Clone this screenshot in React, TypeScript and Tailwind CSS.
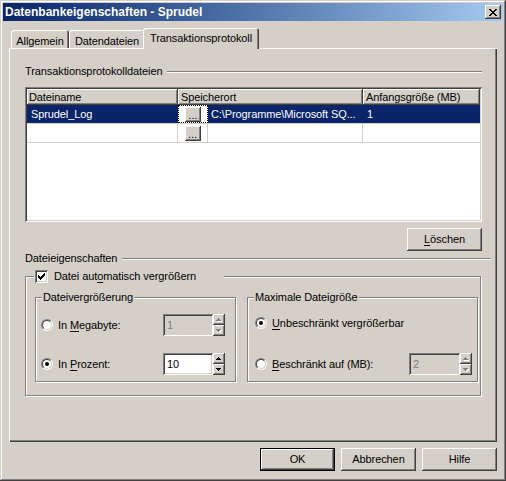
import React from 'react';

// classic Windows 2000 bevels
const RAISED = 'shadow-[inset_-1px_-1px_0_#404040,inset_1px_1px_0_#ffffff,inset_-2px_-2px_0_#808080]';
const SUNKEN = 'shadow-[inset_1px_1px_0_#808080,inset_-1px_-1px_0_#ffffff,inset_2px_2px_0_#404040,inset_-2px_-2px_0_#d4d0c8]';
const ETCHED = 'border border-[#808080] shadow-[inset_1px_1px_0_#ffffff,1px_1px_0_#ffffff]';
const LINE = 'flex-1 border-t border-t-[#808080] border-b border-b-white';

const CHECK = [
  [6, 0], [5, 1], [6, 1], [0, 2], [4, 2], [5, 2], [6, 2], [0, 3], [1, 3], [3, 3], [4, 3], [5, 3],
  [0, 4], [1, 4], [2, 4], [3, 4], [4, 4], [1, 5], [2, 5], [3, 5], [2, 6],
];

const CLOSE = [
  [0, 0], [1, 0], [6, 0], [7, 0], [1, 1], [2, 1], [5, 1], [6, 1], [2, 2], [3, 2], [4, 2], [5, 2],
  [3, 3], [4, 3], [2, 4], [3, 4], [4, 4], [5, 4], [1, 5], [2, 5], [5, 5], [6, 5], [0, 6], [1, 6], [6, 6], [7, 6],
];

const Pixels: React.FC<{ pts: number[][]; w: number; h: number; color?: string }> = ({ pts, w, h, color = '#000' }) => (
  <svg width={w} height={h} viewBox={`0 0 ${w} ${h}`} shapeRendering="crispEdges">
    {pts.map(([x, y]) => (
      <rect key={`${x}-${y}`} x={x} y={y} width={1} height={1} fill={color} />
    ))}
  </svg>
);

const Radio: React.FC<{ checked?: boolean }> = ({ checked }) => (
  <span className="block w-[12px] h-[12px] shrink-0 rounded-full border border-t-[#808080] border-l-[#808080] border-b-white border-r-white">
    <span className="flex items-center justify-center w-full h-full rounded-full border border-t-[#404040] border-l-[#404040] border-b-[#d4d0c8] border-r-[#d4d0c8] bg-white">
      {checked && <span className="block w-[4px] h-[4px] rounded-full bg-black" />}
    </span>
  </span>
);

const Arrow: React.FC<{ up?: boolean; disabled?: boolean }> = ({ up, disabled }) => {
  const d = up ? 'M2 0h1v1h1v1h1v1H0V2h1V1h1z' : 'M0 0h5v1H4v1H3v1H2V2H1V1H0z';
  return (
    <svg width={6} height={4} viewBox="0 0 6 4" shapeRendering="crispEdges">
      {disabled && <path d={d} fill="#ffffff" transform="translate(1 1)" />}
      <path d={d} fill={disabled ? '#808080' : '#000000'} />
    </svg>
  );
};

const Spin: React.FC<{ value: string; disabled?: boolean; editW: string }> = ({ value, disabled, editW }) => (
  <div className="flex">
    <div
      className={`${editW} h-[22px] ${SUNKEN} flex items-center pl-[4px] ${
        disabled ? 'bg-[#d4d0c8] text-[#808080]' : 'bg-white text-black'
      }`}
    >
      {value}
    </div>
    <div className="flex flex-col w-[12px] h-[22px]">
      <div className={`h-[11px] ${RAISED} flex items-center justify-center`}>
        <Arrow up disabled={disabled} />
      </div>
      <div className={`h-[11px] ${RAISED} flex items-center justify-center`}>
        <Arrow disabled={disabled} />
      </div>
    </div>
  </div>
);

const DotsButton: React.FC = () => (
  <div className={`w-[16px] h-[15px] bg-[#d4d0c8] ${RAISED} flex items-end justify-center leading-[11px] pb-[1px] text-black`}>
    ...
  </div>
);

const Tab: React.FC<{ label: string; w: string; selected?: boolean }> = ({ label, w, selected }) => (
  <div
    className={`${w} flex justify-center bg-[#d4d0c8] rounded-t-[3px] shadow-[inset_1px_1px_0_#ffffff,inset_-1px_0_0_#404040,inset_-2px_0_0_#808080] ${
      selected ? 'h-[21px] -ml-[2px] relative z-10 pt-[4px]' : 'h-[19px] pt-[5px]'
    }`}
  >
    {label}
  </div>
);

export default function App() {
  return (
    <div className="w-[506px] h-[481px] bg-[#d4d0c8] p-[3px] flex flex-col text-[11px] leading-[13px] tracking-[-0.1px] text-black font-['Liberation_Sans',Arial,sans-serif] shadow-[inset_-1px_-1px_0_#404040,inset_1px_1px_0_#d4d0c8,inset_-2px_-2px_0_#808080,inset_2px_2px_0_#ffffff]">
      {/* title bar */}
      <div className="h-[18px] flex items-center justify-between pl-[2px] pr-[2px] bg-gradient-to-r from-[#0a246a] to-[#a6caf0]">
        <span className="text-white font-bold text-[12px] tracking-normal">Datenbankeigenschaften - Sprudel</span>
        <div className={`w-[16px] h-[14px] bg-[#d4d0c8] ${RAISED} flex items-center justify-center`}>
          <Pixels pts={CLOSE} w={8} h={7} />
        </div>
      </div>

      {/* tabs */}
      <div className="mt-[7px] ml-[6px] h-[21px] -mb-[1px] flex items-end pl-[2px]">
        <Tab label="Allgemein" w="w-[58px]" />
        <Tab label="Datendateien" w="w-[76px]" />
        <Tab label="Transaktionsprotokoll" w="w-[116px]" selected />
      </div>

      {/* panel */}
      <div className="ml-[6px] w-[488px] h-[394px] pt-[17px] pl-[16px] pr-[15px] flex flex-col shadow-[inset_1px_1px_0_#ffffff,inset_-1px_-1px_0_#404040,inset_-2px_-2px_0_#808080]">
        <div className="h-[13px] flex items-center">
          <span>Transaktionsprotokolldateien</span>
          <div className={`${LINE} ml-[5px]`} />
        </div>

        {/* file table */}
        <div className={`mt-[9px] h-[135px] bg-white p-[2px] ${SUNKEN} flex flex-col`}>
          <div className="h-[16px] flex bg-[#d4d0c8]">
            <div className={`w-[151px] pl-[2px] flex items-center ${RAISED}`}>Dateiname</div>
            <div className={`w-[185px] pl-[3px] flex items-center ${RAISED}`}>Speicherort</div>
            <div className={`flex-1 pl-[3px] flex items-center ${RAISED}`}>Anfangsgröße (MB)</div>
          </div>
          <div className="h-[19px] flex border-b border-[#d4d0c8]">
            <div className="w-[151px] pl-[4px] flex items-center bg-[#0a246a] text-white">Sprudel_Log</div>
            <div className="w-[30px] flex items-center justify-center bg-white border border-dotted border-black">
              <DotsButton />
            </div>
            <div className="w-[155px] pl-[3px] flex items-center bg-[#0a246a] text-white">C:\Programme\Microsoft SQ...</div>
            <div className="flex-1 pl-[4px] flex items-center bg-[#0a246a] text-white">1</div>
          </div>
          <div className="h-[19px] flex border-b border-[#d4d0c8]">
            <div className="w-[151px] border-r border-[#d4d0c8]" />
            <div className="w-[30px] flex items-center justify-center border-r border-[#d4d0c8]">
              <DotsButton />
            </div>
            <div className="w-[155px] border-r border-[#d4d0c8]" />
            <div className="flex-1" />
          </div>
        </div>

        <div className={`self-end mt-[6px] w-[75px] h-[23px] ${RAISED} flex items-center justify-center`}>
          <span>
            <span className="underline underline-offset-[2px]">L</span>öschen
          </span>
        </div>

        <div className="mt-[1px] -mr-[9px] h-[13px] flex items-center">
          <span>Dateieigenschaften</span>
          <div className={`${LINE} ml-[5px]`} />
        </div>

        {/* auto grow group */}
        <div className={`relative mt-[11px] w-[456px] h-[120px] ${ETCHED} pt-[20px] pl-[9px] flex gap-[11px]`}>
          <div className="absolute left-[8px] top-[-7px] w-[190px] h-[13px] flex items-center bg-[#d4d0c8] pl-[1px]">
            <div className={`w-[13px] h-[13px] bg-white ${SUNKEN} flex items-center justify-center`}>
              <Pixels pts={CHECK} w={7} h={7} />
            </div>
            <span className="ml-[6px]">
              Datei aut<span className="underline underline-offset-[2px]">o</span>matisch vergrößern
            </span>
          </div>

          <div className={`relative w-[201px] h-[85px] ${ETCHED} pt-[16px] pl-[5px] flex flex-col gap-[17px]`}>
            <span className="absolute left-[6px] top-[-7px] px-[1px] bg-[#d4d0c8]">Dateivergrößerung</span>
            <div className="h-[22px] flex items-center">
              <Radio />
              <span className="ml-[5px] w-[105px]">
                In <span className="underline underline-offset-[2px]">M</span>egabyte:
              </span>
              <Spin value="1" disabled editW="w-[50px]" />
            </div>
            <div className="h-[22px] flex items-center">
              <Radio checked />
              <span className="ml-[5px] w-[105px]">
                In <span className="underline underline-offset-[2px]">P</span>rozent:
              </span>
              <Spin value="10" editW="w-[50px]" />
            </div>
          </div>

          <div className={`relative w-[231px] h-[85px] ${ETCHED} pt-[16px] pl-[7px] flex flex-col`}>
            <span className="absolute left-[6px] top-[-7px] px-[1px] bg-[#d4d0c8]">Maximale Dateigröße</span>
            <div className="h-[18px] flex items-center">
              <Radio checked />
              <span className="ml-[5px]">
                <span className="underline underline-offset-[2px]">U</span>nbeschränkt vergrößerbar
              </span>
            </div>
            <div className="mt-[21px] h-[22px] flex items-center">
              <Radio />
              <span className="ml-[5px] w-[137px]">
                <span className="underline underline-offset-[2px]">B</span>eschränkt auf (MB):
              </span>
              <Spin value="2" disabled editW="w-[51px]" />
            </div>
          </div>
        </div>
      </div>

      {/* dialog buttons */}
      <div className="ml-[6px] w-[488px] mt-[6px] flex justify-end gap-[6px]">
        <div className="w-[75px] h-[23px] border border-black shadow-[inset_-1px_-1px_0_#404040,inset_1px_1px_0_#ffffff,inset_-2px_-2px_0_#808080] flex items-center justify-center">
          OK
        </div>
        <div className={`w-[75px] h-[23px] ${RAISED} flex items-center justify-center`}>Abbrechen</div>
        <div className={`w-[75px] h-[23px] ${RAISED} flex items-center justify-center`}>Hilfe</div>
      </div>
    </div>
  );
}
